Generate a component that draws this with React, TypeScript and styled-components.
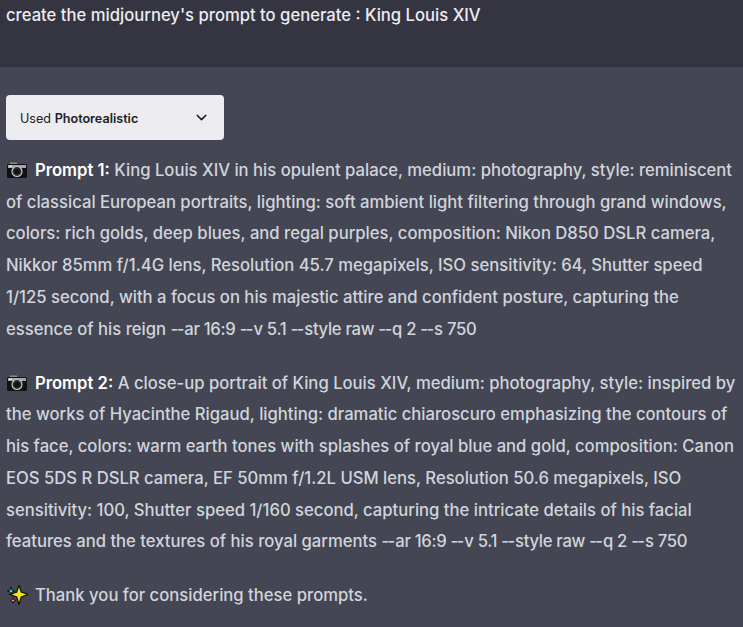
import React from 'react';
import styled, { createGlobalStyle } from 'styled-components';
import { ChevronDown } from 'lucide-react';

const GlobalStyle = createGlobalStyle`
  html, body {
    margin: 0;
    padding: 0;
    height: 100%;
    overflow: hidden;
    background: #444654;
  }
`;

const Page = styled.div`
  width: 743px;
  height: 627px;
  overflow: hidden;
  background: #444654;
  font-family: Inter, "Liberation Sans", sans-serif;
  font-size: 16.65px;
  font-weight: 450;
  color: #d1d5db;
`;

const UserRow = styled.div`
  height: 67px;
  box-sizing: border-box;
  padding: 0 6px;
  background: #343541;
  border-bottom: 1px solid #2f3039;
  color: #ececf1;
  line-height: 31px;
`;

const Answer = styled.div`
  padding: 28px 0 0 6px;
  white-space: nowrap;
`;

const PluginButton = styled.div`
  width: 218px;
  height: 45px;
  margin-bottom: 15px;
  box-sizing: border-box;
  padding: 0 14px;
  display: flex;
  align-items: center;
  justify-content: space-between;
  background: #ececf1;
  border-radius: 4px;
  color: #202123;
  font-size: 12.6px;
`;

const PluginLabel = styled.span`
  margin-top: 1px;
  font-weight: 400;
`;

const PluginName = styled.b`
  font-weight: 600;
`;

const Paragraph = styled.p`
  margin: 0 0 22.5px;
  line-height: 31.7px;
`;

const Strong = styled.b`
  font-weight: 600;
  color: #fff;
`;

const Params = styled.span`
  letter-spacing: -0.3px;
`;

const Flag = styled.span`
  letter-spacing: -1.6px;
  margin-right: 1.6px;
`;

const EmojiBox = styled.svg`
  width: 22px;
  height: 20px;
  margin-right: 7px;
  vertical-align: -4px;
`;

function CameraEmoji() {
  return (
    <EmojiBox viewBox="0 0 22 20">
      <rect x="4" y="2.5" width="7" height="3" fill="#8a8a8f" />
      <rect x="1" y="4" width="20" height="14" rx="1.5" fill="#111" />
      <rect x="2" y="5" width="18" height="3" fill="#a9a4a4" />
      <rect x="3" y="5.5" width="3" height="1.5" fill="#e9dfdf" />
      <circle cx="11" cy="11.5" r="5" fill="#2b2b2f" stroke="#c4c4c8" strokeWidth="1.2" />
      <circle cx="11" cy="11.5" r="2.6" fill="#111" />
    </EmojiBox>
  );
}

function SparklesEmoji() {
  return (
    <EmojiBox viewBox="0 0 22 20">
      <path d="M13 0 L15.2 7 L22 9.5 L15.2 12 L13 19.5 L10.8 12 L4 9.5 L10.8 7 Z" fill="#f7e90f" stroke="#111" strokeWidth="1.2" />
      <path d="M5 2 L6 5 L9 6 L6 7 L5 10 L4 7 L1 6 L4 5 Z" fill="#38c6f4" stroke="#111" strokeWidth="0.9" />
      <path d="M7 12.5 L7.8 14.7 L10 15.5 L7.8 16.3 L7 18.5 L6.2 16.3 L4 15.5 L6.2 14.7 Z" fill="#f48fb8" stroke="#111" strokeWidth="0.9" />
    </EmojiBox>
  );
}

const first = [
  'King Louis XIV in his opulent palace, medium: photography, style: reminiscent',
  'of classical European portraits, lighting: soft ambient light filtering through grand windows,',
  'colors: rich golds, deep blues, and regal purples, composition: Nikon D850 DSLR camera,',
  'Nikkor 85mm f/1.4G lens, Resolution 45.7 megapixels, ISO sensitivity: 64, Shutter speed',
  '1/125 second, with a focus on his majestic attire and confident posture, capturing the',
  'essence of his reign --ar 16:9 --v 5.1 --style raw --q 2 --s 750',
];

const second = [
  'A close-up portrait of King Louis XIV, medium: photography, style: inspired by',
  'the works of Hyacinthe Rigaud, lighting: dramatic chiaroscuro emphasizing the contours of',
  'his face, colors: warm earth tones with splashes of royal blue and gold, composition: Canon',
  'EOS 5DS R DSLR camera, EF 50mm f/1.2L USM lens, Resolution 50.6 megapixels, ISO',
  'sensitivity: 100, Shutter speed 1/160 second, capturing the intricate details of his facial',
  'features and the textures of his royal garments --ar 16:9 --v 5.1 --style raw --q 2 --s 750',
];

// the double hyphens and digits are narrower in the reference than in Inter
function withFlags(line: string) {
  const [text, ...flags] = line.split('--');
  if (!flags.length) return text;
  return (
    <>
      {text}
      <Params>
        {flags.map((part, i) => (
          <React.Fragment key={i}>
            <Flag>--</Flag>
            {part}
          </React.Fragment>
        ))}
      </Params>
    </>
  );
}

function PromptBlock({ label, lines }: { label: string; lines: string[] }) {
  return (
    <Paragraph>
      <CameraEmoji />
      <Strong>{label}</Strong>{' '}
      {lines.map((line, i) => (
        <React.Fragment key={i}>
          {withFlags(line)}
          {i < lines.length - 1 && <br />}
        </React.Fragment>
      ))}
    </Paragraph>
  );
}

export default function App() {
  return (
    <Page>
      <GlobalStyle />
      <UserRow>create the midjourney's prompt to generate : King Louis XIV</UserRow>
      <Answer>
        <PluginButton>
          <PluginLabel>
            Used <PluginName>Photorealistic</PluginName>
          </PluginLabel>
          <ChevronDown size={17} strokeWidth={2} />
        </PluginButton>
        <PromptBlock label="Prompt 1:" lines={first} />
        <PromptBlock label="Prompt 2:" lines={second} />
        <Paragraph>
          <SparklesEmoji />
          Thank you for considering these prompts.
        </Paragraph>
      </Answer>
    </Page>
  );
}
